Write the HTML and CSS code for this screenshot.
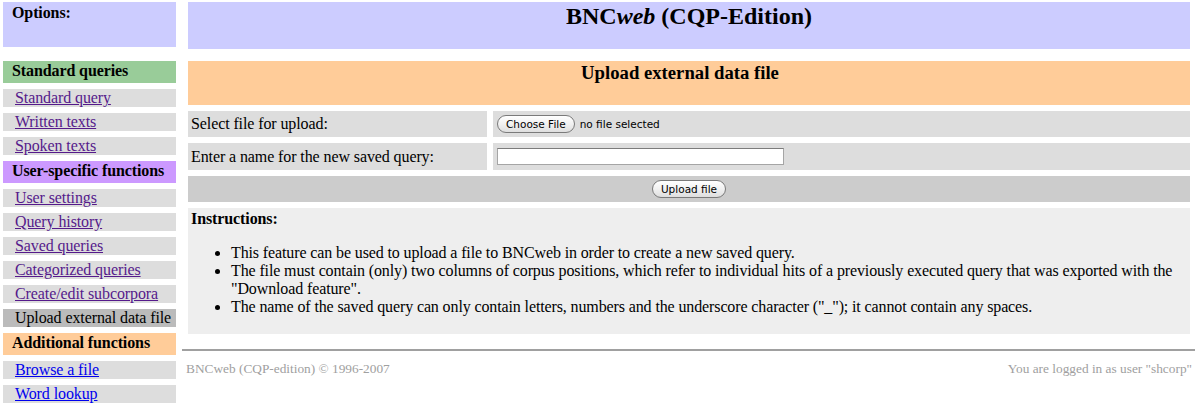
FILE: index.html
```html
<!DOCTYPE html>
<html lang="en">
<head>
  <meta charset="UTF-8" />
  <title>BNCweb (CQP-Edition) - Upload external data file</title>
  <link rel="stylesheet" href="styles.css">
</head>
<body>

  <div class="page">
    <div class="options">Options:</div>
    <div class="banner">
      <h1>BNC<i>web</i> (CQP-Edition)</h1>
    </div>

    <nav class="menu">
      <div class="menu-head green">Standard queries</div>
      <div class="menu-item"><a class="seen" href="#">Standard query</a></div>
      <div class="menu-item"><a class="seen" href="#">Written texts</a></div>
      <div class="menu-item"><a class="seen" href="#">Spoken texts</a></div>
      <div class="menu-head purple">User-specific functions</div>
      <div class="menu-item"><a class="seen" href="#">User settings</a></div>
      <div class="menu-item"><a class="seen" href="#">Query history</a></div>
      <div class="menu-item"><a class="seen" href="#">Saved queries</a></div>
      <div class="menu-item"><a class="seen" href="#">Categorized queries</a></div>
      <div class="menu-item"><a class="seen" href="#">Create/edit subcorpora</a></div>
      <div class="menu-item current">Upload external data file</div>
      <div class="menu-head orange">Additional functions</div>
      <div class="menu-item"><a href="#">Browse a file</a></div>
      <div class="menu-item"><a href="#">Word lookup</a></div>
    </nav>

    <main class="content">
      <h2 class="title">Upload external data file</h2>

      <form class="upload-form">
        <div class="label">Select file for upload:</div>
        <div class="field">
          <span class="mac-btn">Choose File</span>
          <span class="file-name">no file selected</span>
        </div>
        <div class="label">Enter a name for the new saved query:</div>
        <div class="field">
          <input class="name-input" type="text">
        </div>
        <div class="submit-row">
          <span class="mac-btn">Upload file</span>
        </div>
      </form>

      <div class="instructions">
        <div class="instructions-head">Instructions:</div>
        <ul>
          <li>This feature can be used to upload a file to BNCweb in order to create a new saved query.</li>
          <li>The file must contain (only) two columns of corpus positions, which refer to individual hits of a previously executed query that was exported with the "Download feature".</li>
          <li>The name of the saved query can only contain letters, numbers and the underscore character ("_"); it cannot contain any spaces.</li>
        </ul>
      </div>

      <div class="footer">
        <span>BNCweb (CQP-edition) &copy; 1996-2007</span>
        <span>You are logged in as user "shcorp"</span>
      </div>
    </main>
  </div>

</body>
</html>
```

FILE: styles.css
```css
body {
  margin: 0;
  background-color: #ffffff;
  font-family: "Liberation Serif", "Times New Roman", serif;
  font-size: 16px;
  letter-spacing: -0.1px;
  color: #000000;
}
.page {
  display: grid;
  grid-template-columns: 173px 1002px;
  grid-template-rows: 47px auto;
  column-gap: 12px;
  row-gap: 12px;
  padding: 2px 0 0 3px;
}
.options {
  height: 45px;
  box-sizing: border-box;
  padding: 2px 9px;
  background-color: #ccccff;
  font-weight: bold;
  line-height: 18px;
}
.banner {
  background-color: #ccccff;
  text-align: center;
}
.banner h1 {
  margin: 0;
  font-size: 24px;
  line-height: 28px;
  letter-spacing: 0;
}

/* left menu */
.menu {
  display: flex;
  flex-direction: column;
  gap: 6px;
}
.menu-head {
  height: 22px;
  box-sizing: border-box;
  padding: 1px 0 3px 9px;
  font-weight: bold;
  line-height: 18px;
}
.green {
  background-color: #99cc99;
}
.purple {
  background-color: #cc99ff;
}
.orange {
  background-color: #ffcc99;
}
.menu-item {
  height: 18px;
  padding-left: 12px;
  background-color: #dddddd;
  line-height: 18px;
  white-space: nowrap;
}
.menu-item.current {
  background-color: #bbbbbb;
}
a {
  color: #0000ee;
}
a.seen {
  color: #551a8b;
}

/* main area */
.title {
  height: 44px;
  box-sizing: border-box;
  margin: 0 0 6px;
  padding: 1px 18px 0 0;
  background-color: #ffcc99;
  font-size: 18.7px;
  line-height: 21px;
  letter-spacing: 0;
  text-align: center;
}
.upload-form {
  display: grid;
  grid-template-columns: 299px 1fr;
  grid-template-rows: 26px 27px 26px;
  gap: 6px;
  margin: 0;
}
.label,
.field {
  display: flex;
  align-items: center;
  padding: 0 3px;
  background-color: #dddddd;
}
.field {
  padding-left: 4px;
}
.submit-row {
  grid-column: 1 / 3;
  display: flex;
  align-items: center;
  justify-content: center;
  background-color: #cccccc;
}
.mac-btn {
  display: inline-block;
  height: 18px;
  box-sizing: border-box;
  padding: 0 8px;
  border: 1px solid #7a7a7a;
  border-radius: 9px;
  background: linear-gradient(#ffffff, #f1f1f1 50%, #dedede);
  font-family: "DejaVu Sans", "Liberation Sans", sans-serif;
  font-size: 10.5px;
  line-height: 16px;
  letter-spacing: 0;
  color: #000000;
}
.file-name {
  margin-left: 5px;
  font-family: "DejaVu Sans", "Liberation Sans", sans-serif;
  font-size: 10.5px;
  letter-spacing: 0;
}
.name-input {
  width: 287px;
  height: 17px;
  box-sizing: border-box;
  margin: 0;
  padding: 1px 2px;
  border: 1px solid #a5a5a5;
  border-top-color: #7c7c7c;
  background-color: #ffffff;
}
.instructions {
  margin-top: 6px;
  padding: 2px 3px;
  background-color: #eeeeee;
  line-height: 18px;
}
.instructions-head {
  font-weight: bold;
}
.instructions ul {
  margin: 16px 0;
  padding-left: 40px;
  letter-spacing: -0.12px;
}

.footer {
  display: flex;
  justify-content: space-between;
  margin: 15px -5px 0 -6px;
  padding: 10px 3px 0 4px;
  border-top: 2px solid #a0a0a0;
  font-size: 13.33px;
  letter-spacing: 0;
  color: #a0a0a0;
}
```
